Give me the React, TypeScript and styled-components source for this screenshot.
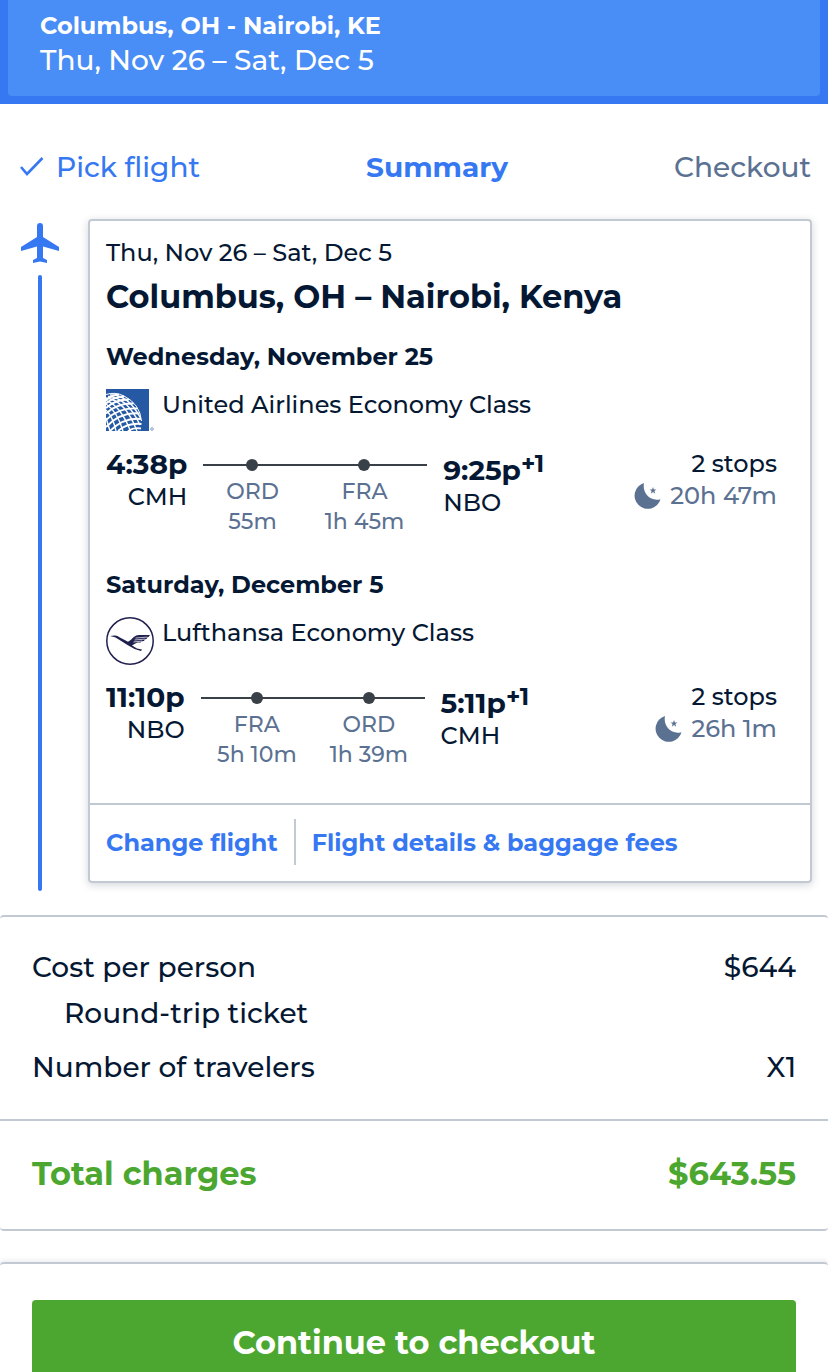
import React from 'react';
import styled, { createGlobalStyle } from 'styled-components';

const blue = '#3578f2';
const ink = '#051833';
const slate = '#5b7192';
const rule = '#c3c9d2';
const green = '#4ca730';

const GlobalStyle = createGlobalStyle`
  * { box-sizing: border-box; }
  body {
    margin: 0;
    background: #fff;
    color: ${ink};
    font-family: Montserrat, Inter, "Open Sans", sans-serif;
    font-size: 24px;
    font-weight: 500;
    line-height: 32px;
  }
  h1, h2, h3, p, dl, dd, ol { margin: 0; padding: 0; }
  strong { font-weight: 700; }
  a { color: ${blue}; text-decoration: none; }
`;

const Header = styled.header`
  background: ${blue};
  padding: 0 8px 8px;
`;

const SearchButton = styled.button`
  display: flex;
  flex-direction: column;
  width: 100%;
  height: 96px;
  padding: 9px 32px;
  border: 0;
  border-radius: 0 0 4px 4px;
  background: #498df6;
  color: #fff;
  font-family: inherit;
  font-weight: 500;
  text-align: left;
  cursor: pointer;
`;

const SearchRoute = styled.strong`
  font-size: 24px;
  line-height: 34px;
`;

const SearchDates = styled.span`
  font-size: 28px;
  line-height: 34px;
`;

const Steps = styled.ol`
  display: flex;
  justify-content: space-between;
  padding: 45px 17px 34px;
  list-style: none;
  font-size: 28px;
  line-height: 36px;
`;

const Step = styled.li<{ $current?: boolean }>`
  color: ${(p) => (p.$current ? blue : slate)};
  font-weight: ${(p) => (p.$current ? 700 : 500)};
`;

const StepLink = styled.a`
  display: flex;
  align-items: center;
  gap: 9px;
`;

const Itinerary = styled.section`
  display: flex;
  padding: 0 16px 24px 20px;
`;

const Timeline = styled.div`
  display: flex;
  flex-direction: column;
  align-items: center;
  gap: 12px;
  width: 40px;
  margin-right: 28px;
  padding-top: 4px;
`;

const TimelineBar = styled.div`
  flex: 1;
  width: 4px;
  border-radius: 2px;
  background: ${blue};
`;

const Card = styled.article`
  flex: 1;
  min-width: 0;
  margin-bottom: 8px;
  border: 2px solid ${rule};
  border-radius: 4px;
  box-shadow: 0 2px 8px rgba(5, 24, 51, 0.18);
`;

const CardBody = styled.div`
  padding: 16px 16px 33px;
`;

const CardDates = styled.p`
  font-size: 24px;
`;

const CardTitle = styled.h1`
  margin-bottom: 24px;
  padding-top: 8px;
  font-size: 32px;
  line-height: 40px;
`;

const Leg = styled.section`
  & + & { margin-top: 32px; }
`;

const LegDate = styled.h2`
  margin-bottom: 16px;
  font-size: 24px;
  line-height: 32px;
`;

const Airline = styled.div`
  display: flex;
  gap: 8px;
  margin-bottom: 16px;
`;

const LogoSlot = styled.span`
  flex: none;
  width: 48px;

  svg { display: block; }
`;

const FlightRow = styled.div`
  display: flex;
  padding-right: 17px;
`;

const Endpoint = styled.div<{ $end?: boolean }>`
  padding-top: ${(p) => (p.$end ? 6 : 0)}px;
  text-align: ${(p) => (p.$end ? 'left' : 'right')};
`;

const Time = styled.strong`
  display: block;
  font-size: 28px;
  line-height: 33px;
`;

const NextDay = styled.sup`
  font-size: 24px;
  line-height: 0;
  vertical-align: 8px;
`;

const Stops = styled.div`
  display: flex;
  justify-content: space-around;
  width: 224px;
  margin: 16px 16px 0;
  border-top: 2px solid #3a4048;
`;

const Stop = styled.div`
  display: flex;
  flex-direction: column;
  align-items: center;
  margin-top: -7px;
  color: ${slate};
  font-size: 22px;
  line-height: 30px;
  white-space: nowrap;
`;

const Dot = styled.i`
  width: 12px;
  height: 12px;
  margin-bottom: 6px;
  border-radius: 50%;
  background: #3a4048;
`;

const Duration = styled.div`
  margin-left: auto;
  text-align: right;
`;

const Elapsed = styled.div`
  display: flex;
  align-items: center;
  justify-content: flex-end;
  gap: 8px;
  color: ${slate};
`;

const CardFooter = styled.footer`
  display: flex;
  padding: 14px 0 16px;
  border-top: 2px solid ${rule};
  font-weight: 700;
`;

const FooterLink = styled.a`
  padding: 8px 16px 6px;
  & + & { border-left: 2px solid ${rule}; }
`;

const Costs = styled.dl`
  border: solid ${rule};
  border-width: 2px 0;
  border-radius: 4px;
`;

const CostGroup = styled.div`
  padding: 31px 32px 33px;
  font-size: 28px;
  line-height: 38px;
`;

const CostLine = styled.div`
  display: flex;
  justify-content: space-between;
`;

const CostNote = styled.dd`
  padding: 8px 32px 16px;
`;

const Total = styled(CostLine)`
  padding: 31px 32px 33px;
  border-top: 2px solid ${rule};
  color: ${green};
  font-size: 32px;
  font-weight: 700;
  line-height: 44px;
`;

const ActionBar = styled.div`
  margin-top: 31px;
  padding: 36px 32px 0;
  border-top: 2px solid ${rule};
  border-radius: 4px 4px 0 0;
  box-shadow: 0 -2px 4px rgba(5, 24, 51, 0.08);
`;

const ContinueButton = styled.button`
  display: block;
  width: 100%;
  height: 84px;
  border: 0;
  border-radius: 4px;
  background: ${green};
  color: #fff;
  font-family: inherit;
  font-size: 32px;
  font-weight: 700;
  cursor: pointer;
`;

const Page = styled.main`
  height: 100vh;
  overflow: hidden;
`;

const Check = () => (
  <svg width="30" height="24" viewBox="0 0 30 24" fill="none" aria-hidden="true">
    <path d="M4 12 10 19 25.500 3" stroke={blue} strokeWidth="2.600" />
  </svg>
);

const Plane = () => (
  <svg width="40" height="40" viewBox="0 0 40 40" fill={blue} aria-hidden="true">
    <path d="M17 3Q17 0 20 0T23 3V14L39 24V28L23 23.500V35L27 37V40L20 38.500 13 40V37L17 35V23.500L1 28V24L17 14Z" />
  </svg>
);

const Moon = () => (
  <svg width="28" height="28" viewBox="0 0 28 28" fill={slate} aria-hidden="true">
    <path d="M10 1C8 11 16 20 26.500 17.200A13.200 13.200 0 1 1 10 1Z" />
    <path d="m19 5 .9 2.500h2.600l-2.100 1.600.8 2.600L19 10.100l-2.200 1.600.8-2.600-2.100-1.600h2.600Z" />
  </svg>
);

const UnitedLogo = () => (
  <svg width="48" height="43" viewBox="0 0 48 43" role="img" aria-label="United Airlines">
    <defs>
      <clipPath id="tile"><path d="M0 0H43V42H0Z" /></clipPath>
    </defs>
    <path d="M0 0H43V42H0Z" fill="#2559a4" />
    <g clipPath="url(#tile)" fill="none" stroke="#fff">
      <path d="M0 5.500Q9 2.500 18 7 34 15 35.500 32" strokeWidth="1" />
      <path d="M4 6Q22 5 34.500 29M2 7.500Q21 8 34 36M0 9Q19 11 31 42M0 11.500Q14 16 24.500 42M0 15Q11 22 17 42M0 21Q7 28 10 42M0 29 4 42" strokeWidth="1.400" />
      <path d="M0 11Q6 6 13 5.500M0 14.500Q7 8 18 7.500M0 19Q9 10.500 23 10.500M0 24.500Q11 14 27.500 14.500M0 31Q13 18 31 19.500M0 38Q15 22.500 33.500 24.500M4 42Q18 28 35 30M12 42Q22 33.500 35.500 35M22 42Q28 38 35 39.500" strokeWidth="1.800" />
    </g>
    <circle cx="46" cy="40" r="1.300" fill="none" stroke="#7fa0cf" />
  </svg>
);

const LufthansaLogo = () => (
  <svg width="48" height="48" viewBox="0 0 48 48" role="img" aria-label="Lufthansa">
    <circle cx="24" cy="24" r="23.200" fill="none" stroke="#20204f" strokeWidth="1.500" />
    <path d="M4 19 8.500 18.400Q11.500 18.200 13.500 20.200L22 24.800Q25 23 27.500 20.200 30 18 33 18L44 18 42.500 20 41.500 20.200 40.500 22 39 22.200 38 24 36 24.200 34.500 25.600 31.500 25.600Q28 27 26 28.500L31 31.500 36 32.500 35 34Q28 32.500 21.500 28L12 22 9 20.200Z" fill="#20204f" />
    <path d="M29.500 21 41.500 20.100M28.500 23 39 22.100M27.500 25 36 24.100" stroke="#fff" strokeWidth=".7" />
  </svg>
);

type Flight = {
  date: string;
  airline: string;
  logo: React.ReactNode;
  from: [string, string];
  to: [string, string];
  stops: [string, string][];
  elapsed: string;
};

const flights: Flight[] = [
  {
    date: 'Wednesday, November 25',
    airline: 'United Airlines Economy Class',
    logo: <UnitedLogo />,
    from: ['4:38p', 'CMH'],
    to: ['9:25p', 'NBO'],
    stops: [['ORD', '55m'], ['FRA', '1h 45m']],
    elapsed: '20h 47m',
  },
  {
    date: 'Saturday, December 5',
    airline: 'Lufthansa Economy Class',
    logo: <LufthansaLogo />,
    from: ['11:10p', 'NBO'],
    to: ['5:11p', 'CMH'],
    stops: [['FRA', '5h 10m'], ['ORD', '1h 39m']],
    elapsed: '26h 1m',
  },
];

const FlightLeg = ({ flight }: { flight: Flight }) => (
  <Leg>
    <LegDate>{flight.date}</LegDate>
    <Airline>
      <LogoSlot>{flight.logo}</LogoSlot>
      <span>{flight.airline}</span>
    </Airline>
    <FlightRow>
      <Endpoint>
        <Time>{flight.from[0]}</Time>
        {flight.from[1]}
      </Endpoint>
      <Stops>
        {flight.stops.map(([code, wait]) => (
          <Stop key={code}>
            <Dot />
            <span>{code}</span>
            <span>{wait}</span>
          </Stop>
        ))}
      </Stops>
      <Endpoint $end>
        <Time>{flight.to[0]}<NextDay>+1</NextDay></Time>
        {flight.to[1]}
      </Endpoint>
      <Duration>
        2 stops
        <Elapsed><Moon />{flight.elapsed}</Elapsed>
      </Duration>
    </FlightRow>
  </Leg>
);

export default function App() {
  return (
    <Page>
      <GlobalStyle />
      <Header>
        <SearchButton type="button">
          <SearchRoute>Columbus, OH - Nairobi, KE</SearchRoute>
          <SearchDates>Thu, Nov 26 – Sat, Dec 5</SearchDates>
        </SearchButton>
      </Header>
      <Steps>
        <Step><StepLink href="#flights"><Check />Pick flight</StepLink></Step>
        <Step $current aria-current="step">Summary</Step>
        <Step>Checkout</Step>
      </Steps>
      <Itinerary>
        <Timeline><Plane /><TimelineBar /></Timeline>
        <Card>
          <CardBody>
            <CardDates>Thu, Nov 26 – Sat, Dec 5</CardDates>
            <CardTitle>Columbus, OH – Nairobi, Kenya</CardTitle>
            {flights.map((flight) => <FlightLeg key={flight.date} flight={flight} />)}
          </CardBody>
          <CardFooter>
            <FooterLink href="#change">Change flight</FooterLink>
            <FooterLink href="#details">Flight details &amp; baggage fees</FooterLink>
          </CardFooter>
        </Card>
      </Itinerary>
      <Costs>
        <CostGroup>
          <CostLine><dt>Cost per person</dt><dd>$644</dd></CostLine>
          <CostNote>Round-trip ticket</CostNote>
          <CostLine><dt>Number of travelers</dt><dd>X1</dd></CostLine>
        </CostGroup>
        <Total><dt>Total charges</dt><dd>$643.55</dd></Total>
      </Costs>
      <ActionBar>
        <ContinueButton type="button">Continue to checkout</ContinueButton>
      </ActionBar>
    </Page>
  );
}
